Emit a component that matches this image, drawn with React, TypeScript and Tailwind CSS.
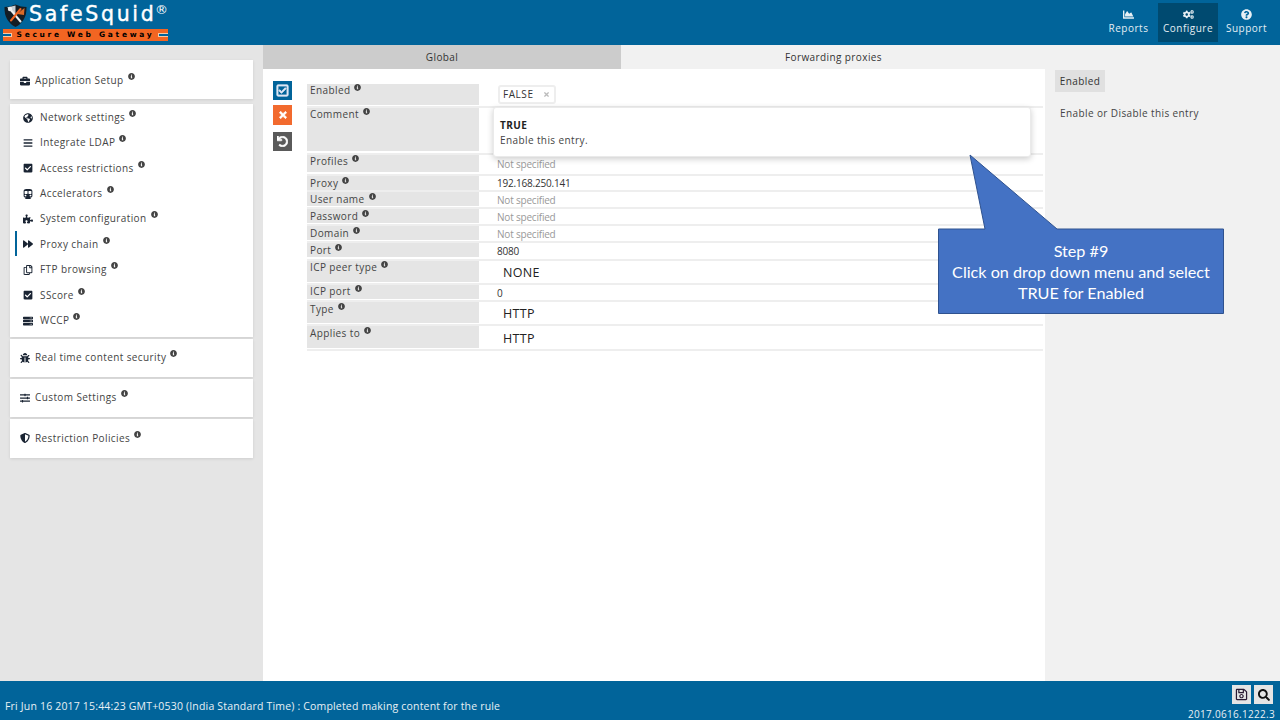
import { FaBriefcase, FaGlobeAmericas, FaBars, FaCheckSquare, FaSubway, FaPuzzlePiece, FaForward, FaRegCopy, FaServer, FaBug, FaSlidersH, FaShieldAlt, FaInfoCircle, FaChartArea, FaCogs, FaQuestionCircle, FaRegSave, FaSearch, FaRegCheckSquare, FaTimes, FaUndo } from "react-icons/fa";
import type { IconType } from "react-icons";

const Info = () => (
  <FaInfoCircle className="inline-block w-[7px] h-[7px] text-[#444] relative -top-[4px] ml-[4px]" />
);

const subItems: { label: string; icon: IconType; active?: boolean; h: string }[] = [
  { label: "Network settings", icon: FaGlobeAmericas, h: "h-[25px]" },
  { label: "Integrate LDAP", icon: FaBars, h: "h-[25px]" },
  { label: "Access restrictions", icon: FaCheckSquare, h: "h-[26px]" },
  { label: "Accelerators", icon: FaSubway, h: "h-[25px]" },
  { label: "System configuration", icon: FaPuzzlePiece, h: "h-[25px]" },
  { label: "Proxy chain", icon: FaForward, active: true, h: "h-[26px]" },
  { label: "FTP browsing", icon: FaRegCopy, h: "h-[25px]" },
  { label: "SScore", icon: FaCheckSquare, h: "h-[26px]" },
  { label: "WCCP", icon: FaServer, h: "h-[25px]" },
];

const Section = ({ label, icon: Icon, h }: { label: string; icon: IconType; h: string }) => (
  <div className={`${h} bg-white flex items-center pl-[10px] shadow-[0_1px_3px_rgba(0,0,0,0.1)]`}>
    <Icon className="w-[10px] h-[10px] text-[#1a2433] mr-[5px]" />
    <span>{label}</span>
    <Info />
  </div>
);

const rows: { label: string; rowH: string; labelH: string; labelLead: string; value?: string; valueCls?: string }[] = [
  { label: "Enabled", rowH: "h-[24px]", labelH: "h-[21px]", labelLead: "leading-[12px]" },
  { label: "Comment", rowH: "h-[47px]", labelH: "h-[43px]", labelLead: "leading-[12px]" },
  { label: "Profiles", rowH: "h-[21px]", labelH: "h-[17px]", labelLead: "leading-[12px]", value: "Not specified", valueCls: "pl-[18px] pt-[2px] text-[#999] text-[10px] tracking-[-0.2px] leading-[14px]" },
  { label: "Proxy", rowH: "h-[16px]", labelH: "h-[14px]", labelLead: "leading-[14px]", value: "192.168.250.141", valueCls: "pl-[18px] text-[#333] text-[10px] tracking-[-0.2px] leading-[14px]" },
  { label: "User name", rowH: "h-[17px]", labelH: "h-[14px]", labelLead: "leading-[14px]", value: "Not specified", valueCls: "pl-[18px] pt-[1px] text-[#999] text-[10px] tracking-[-0.2px] leading-[14px]" },
  { label: "Password", rowH: "h-[17px]", labelH: "h-[14px]", labelLead: "leading-[14px]", value: "Not specified", valueCls: "pl-[18px] pt-[1px] text-[#999] text-[10px] tracking-[-0.2px] leading-[14px]" },
  { label: "Domain", rowH: "h-[17px]", labelH: "h-[14px]", labelLead: "leading-[14px]", value: "Not specified", valueCls: "pl-[18px] pt-[1px] text-[#999] text-[10px] tracking-[-0.2px] leading-[14px]" },
  { label: "Port", rowH: "h-[18px]", labelH: "h-[14px]", labelLead: "leading-[14px]", value: "8080", valueCls: "pl-[18px] pt-[1px] text-[#333] text-[10px] tracking-[-0.2px] leading-[14px]" },
  { label: "ICP peer type", rowH: "h-[24px]", labelH: "h-[21px]", labelLead: "leading-[12px]", value: "NONE", valueCls: "pl-[24px] pt-[1px] text-[#222] text-[12.5px] tracking-[0.3px] leading-[22px]" },
  { label: "ICP port", rowH: "h-[17px]", labelH: "h-[14px]", labelLead: "leading-[12px]", value: "0", valueCls: "pl-[18px] pt-[1px] text-[#333] text-[10px] tracking-[-0.2px] leading-[14px]" },
  { label: "Type", rowH: "h-[24px]", labelH: "h-[21px]", labelLead: "leading-[14px]", value: "HTTP", valueCls: "pl-[24px] pt-[1px] text-[#222] text-[12.5px] tracking-[0.3px] leading-[22px]" },
  { label: "Applies to", rowH: "h-[25px]", labelH: "h-[22px]", labelLead: "leading-[14px]", value: "HTTP", valueCls: "pl-[24px] pt-[2px] text-[#222] text-[12.5px] tracking-[0.3px] leading-[22px]" },
];

const Logo = () => (
  <div className="relative w-[170px] h-[45px] shrink-0">
    <svg className="absolute left-[4px] top-[4px]" width="23" height="23" viewBox="0 0 23 23">
      <path d="M0.5 3 Q6 3 11.5 0.5 Q17 3 22.5 3 Q23 17 11.5 23 Q0 17 0.5 3 Z" fill="#141d24" />
      <path d="M3 3.5 L11.5 1.5 L11.5 10 Z" fill="#c9ced2" />
      <path d="M13 10 L20.5 4 L20 11 Z" fill="#d96a28" />
      <path d="M6 5 L16.5 17.5" stroke="#f0f0f0" strokeWidth="2" strokeLinecap="round" />
      <path d="M16.5 5 L7 16.5" stroke="#f26522" strokeWidth="2" strokeLinecap="round" />
      <circle cx="6" cy="5" r="2.2" fill="#f0f0f0" />
    </svg>
    <div className="absolute left-[29px] top-[0px] text-white text-[20.5px] leading-[29px] tracking-[2.7px] font-['DejaVu_Sans',sans-serif] [-webkit-text-stroke:0.4px_white] whitespace-nowrap">SafeSquid</div>
    <div className="absolute left-[155px] top-[2px] text-white text-[13px] leading-[16px] font-['DejaVu_Sans',sans-serif]">®</div>
    <div className="absolute left-[3px] top-[29px] w-[165px] h-[12px] bg-[#f26522] flex items-center justify-center">
      <span className="text-black text-[7.5px] font-bold tracking-[2.7px] font-['DejaVu_Sans',sans-serif] whitespace-nowrap">Secure Web Gateway</span>
    </div>
    <div className="absolute left-[3px] top-[33px] w-[9px] h-[4px] bg-[#01649a] border border-[#f5c9a8] border-l-0" />
    <div className="absolute left-[158px] top-[33px] w-[10px] h-[4px] bg-[#01649a] border border-[#f5c9a8] border-r-0" />
  </div>
);

const NavBtn = ({ label, icon: Icon, active, w }: { label: string; icon: IconType; active?: boolean; w: string }) => (
  <div className={`${w} h-[39px] flex flex-col items-center pt-[6px] ${active ? "bg-[#004a70]" : ""}`}>
    <Icon className="w-[11px] h-[11px] text-[#e8f0f5] mb-[2px]" />
    <span className="text-[10px] leading-[13px] text-[#e4eef4] tracking-[0.5px]">{label}</span>
  </div>
);

export default function App() {
  return (
    <div className="relative w-[1280px] h-[720px] overflow-hidden flex flex-col bg-white font-['Open_Sans',sans-serif] text-[10px] text-[#444] tracking-[0.4px]">
      <header className="h-[45px] shrink-0 bg-[#01649a] flex items-start justify-between">
        <Logo />
        <nav className="flex items-start pt-[3px] pr-[5px]">
          <NavBtn label="Reports" icon={FaChartArea} w="w-[59px]" />
          <NavBtn label="Configure" icon={FaCogs} active w="w-[60px]" />
          <NavBtn label="Support" icon={FaQuestionCircle} w="w-[57px]" />
        </nav>
      </header>

      <div className="flex-1 flex min-h-0">
        <aside className="w-[263px] shrink-0 bg-[#e5e5e5] pt-[15px] pl-[10px] pr-[10px] flex flex-col">
          <Section label="Application Setup" icon={FaBriefcase} h="h-[39px] pt-[2px]" />
          <div className="mt-[5px] h-[233px] bg-white pt-[1px] shadow-[0_1px_3px_rgba(0,0,0,0.1)]">
            {subItems.map(({ label, icon: Icon, active, h }) => (
              <div key={label} className={`${h} flex items-center pl-[13px] relative`}>
                {active && <div className="absolute left-[5px] top-0 w-[2px] h-[25px] bg-[#01649a]" />}
                <Icon className="w-[10px] h-[10px] text-[#1a2433] mr-[7px]" />
                <span>{label}</span>
                <Info />
              </div>
            ))}
          </div>
          <div className="mt-[2px] flex flex-col gap-[2px]">
            <Section label="Real time content security" icon={FaBug} h="h-[38px] pb-[1px]" />
            <Section label="Custom Settings" icon={FaSlidersH} h="h-[38px] pb-[1px]" />
            <Section label="Restriction Policies" icon={FaShieldAlt} h="h-[39px] pb-[1px]" />
          </div>
        </aside>

        <main className="flex-1 flex flex-col min-w-0">
          <div className="h-[24px] shrink-0 flex text-[#333] bg-[#f1f1f1]">
            <div className="w-[358px] bg-[#cccccc] flex items-center justify-center">Global</div>
            <div className="w-[425px] flex items-center justify-center">Forwarding proxies</div>
          </div>
          <div className="flex-1 flex min-h-0">
            <div className="w-[782px] shrink-0 flex pl-[10px] pt-[12px]">
              <div className="w-[19px] flex flex-col shrink-0">
                <div className="h-[19px] bg-[#01649a] flex items-center justify-center"><FaRegCheckSquare stroke="currentColor" strokeWidth={30} className="w-[13px] h-[13px] text-[#dfe7f5]" /></div>
                <div className="h-[20px] mt-[5px] bg-[#f26a2e] flex items-center justify-center"><FaTimes stroke="currentColor" strokeWidth={40} className="w-[10px] h-[10px] text-white" /></div>
                <div className="h-[19px] mt-[7px] bg-[#5a5a5a] flex items-center justify-center"><FaUndo stroke="currentColor" strokeWidth={30} className="w-[11px] h-[11px] text-white" /></div>
              </div>
              <div className="ml-[15px] w-[736px] pt-[3px]">
                {rows.map((r) => (
                  <div key={r.label} className={`${r.rowH} flex border-b-2 border-[#eeeeee]`}>
                    <div className={`${r.labelH} ${r.labelLead} w-[172px] shrink-0 bg-[#e5e5e5] pl-[3px] text-[#444]`}>
                      {r.label}<Info />
                    </div>
                    {r.value && <div className={r.valueCls}>{r.value}</div>}
                  </div>
                ))}
              </div>
            </div>
            <div className="flex-1 bg-[#f1f1f1] pl-[10px] pt-[1px]">
              <div className="w-[50px] h-[22px] pt-[1px] bg-[#e0e0e0] flex items-center justify-center text-[#333]">Enabled</div>
              <div className="mt-[14px] ml-[5px] text-[#444]">Enable or Disable this entry</div>
            </div>
          </div>
        </main>
      </div>

      <footer className="h-[39px] shrink-0 bg-[#01649a] flex justify-between text-[#e8f0f5]">
        <div className="pl-[5px] pt-[18px] text-[10.5px] leading-[14px] tracking-[0.18px]">Fri Jun 16 2017 15:44:23 GMT+0530 (India Standard Time) : Completed making content for the rule</div>
        <div className="flex flex-col items-end pr-[5px] pt-[4px]">
          <div className="flex gap-[3px] mr-[2px]">
            <div className="w-[19px] h-[19px] bg-[#e5e5e5] flex items-center justify-center"><FaRegSave className="w-[13px] h-[13px] text-[#2a1a33]" /></div>
            <div className="w-[19px] h-[19px] bg-[#e5e5e5] flex items-center justify-center"><FaSearch className="w-[12px] h-[12px] text-[#111]" /></div>
          </div>
          <div className="text-[10px] leading-[12px] mt-[4px] tracking-[0.3px]">2017.0616.1222.3</div>
        </div>
      </footer>

      {/* FALSE chip */}
      <div className="absolute left-[498px] top-[85px] w-[58px] h-[19px] bg-white border-2 border-[#eeeeee] rounded-[3px] flex items-center pl-[3px] text-[#333] tracking-[0.55px]">
        FALSE<FaTimes className="w-[7px] h-[7px] text-[#bbb] ml-[9px]" />
      </div>

      {/* Dropdown menu */}
      <div className="absolute left-[493px] top-[107px] w-[538px] h-[50px] bg-white rounded-[3px] border border-[#eaeaea] shadow-[0_2px_6px_rgba(0,0,0,0.2)] pl-[6px] pt-[10px] leading-[14px]">
        <div className="font-bold text-[#222]">TRUE</div>
        <div className="text-[#444] mt-[1px]">Enable this entry.</div>
      </div>

      {/* Callout */}
      <svg className="absolute left-[930px] top-[150px] pointer-events-none" width="300" height="170" viewBox="930 150 300 170">
        <path d="M970 155 L985 229 L938.5 229 L938.5 313.5 L1223.5 313.5 L1223.5 229 L1057 229 Z" fill="#4472c4" stroke="#2f528f" strokeWidth="1" />
      </svg>
      <div className="absolute left-[939px] top-[240px] w-[284px] text-center text-white font-['Lato',sans-serif] text-[16.2px] leading-[21px] tracking-normal">
        Step #9<br />Click on drop down menu and select<br />TRUE for Enabled
      </div>
    </div>
  );
}
